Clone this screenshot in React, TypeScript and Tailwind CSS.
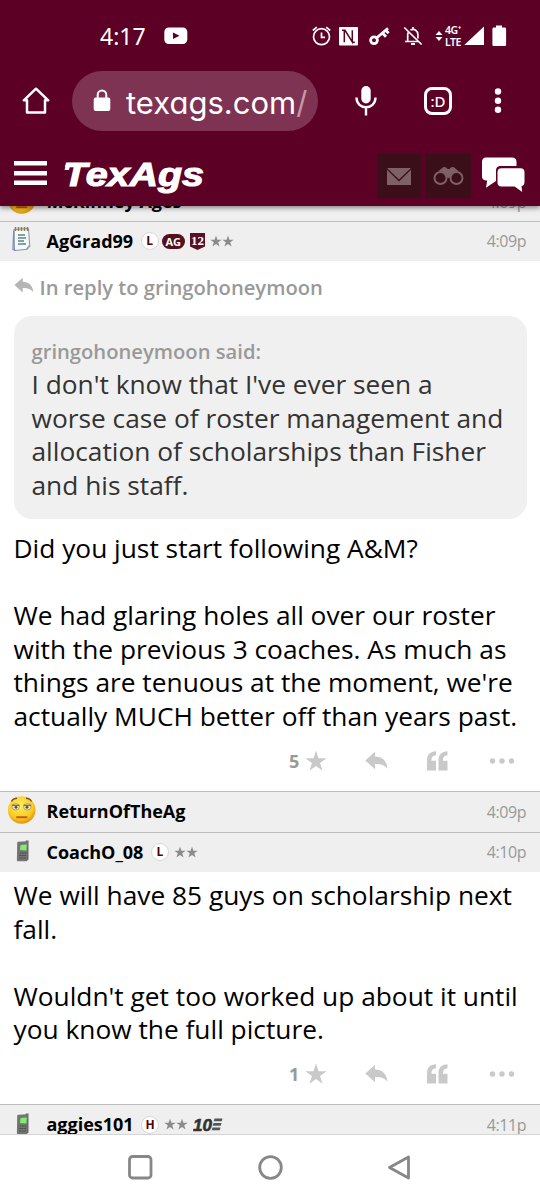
import type { ReactNode } from "react";

function StatusBar() {
  return (
    <div className="flex h-[72px] items-center pl-[100px] font-['Noto_Sans',sans-serif] text-white">
      <span className="w-[64px] text-[23px] leading-none">4:17</span>
      <svg width="24" height="18" viewBox="0 0 24 18">
        <rect x="0.3" y="0.5" width="23" height="16.5" rx="4.5" fill="#fff" />
        <path d="M9 5.5l6.5 3.3L9 12z" fill="#5c0025" />
      </svg>

      {/* alarm */}
      <svg className="ml-[124px]" width="20" height="20" viewBox="0 0 20 20" fill="none" stroke="#fff" strokeWidth="1.7">
        <circle cx="9.5" cy="10.7" r="8" />
        <path d="M9.5 6.5v4.8h3.6M0.8 4.5l4-3.4M14.2 1.1l4 3.4" />
      </svg>
      {/* nfc */}
      <svg className="ml-[7px]" width="19" height="20" viewBox="0 0 19 20">
        <rect y="1" width="19" height="18.5" rx="1" fill="#fff" />
        <path d="M3 4.3h3l7.3 11.500V4.300M5.300 4.300v12M13.300 16.200h2.500" fill="none" stroke="#5c0025" strokeWidth="1.500" />
      </svg>
      {/* key */}
      <svg className="ml-[11px]" width="21" height="20" viewBox="0 0 21 20" fill="none" stroke="#fff" strokeWidth="2.8">
        <circle cx="5" cy="14.3" r="3.4" />
        <path d="M7.8 11.8L19 2.2M13.4 7l3.6 3.8M16.8 4.2l2.8 3" />
      </svg>
      {/* muted bell */}
      <svg className="ml-[13px]" width="20" height="20" viewBox="0 0 20 20" fill="none" stroke="#fff" strokeWidth="1.7">
        <path d="M4.7 15.2V9c0-1 .2-2 .7-2.7M7.4 4.1c4-2 7.5.8 7.5 4.7v3.8M2 15.5h13" />
        <path d="M10 1v2M1.3 1.5L18.6 18.5" />
        <path d="M8 18h4" strokeWidth="2" />
      </svg>
      <svg className="ml-[12px]" width="8" height="12" viewBox="0 0 8 12" fill="#fff">
        <path d="M0.5 5L4 1l3.5 4zM0.5 7L4 11l3.5-4z" />
      </svg>
      <div className="ml-[2px] w-[18px] whitespace-nowrap text-[10.5px] font-semibold leading-[12px] tracking-[-0.5px]">
        <div>4G⁺</div>
        <div>LTE</div>
      </div>
      <svg className="ml-[1px]" width="21" height="20" viewBox="0 0 21 20" fill="#fff">
        <path d="M20 0.5v18.5H0.3z" />
      </svg>
      <svg className="ml-[7px]" width="15" height="22" viewBox="0 0 15 22" fill="#fff">
        <path d="M4 0.5h6v2h2.5c1 0 1.6.6 1.6 1.6V19.5c0 1-.6 1.6-1.6 1.6H2c-1 0-1.6-.6-1.6-1.6V4.1c0-1 .6-1.6 1.6-1.6h2z" />
      </svg>
    </div>
  );
}

function BrowserBar() {
  return (
    <div className="-mt-[1px] flex h-[60px] items-center text-white">
      <svg className="ml-[22px]" width="28" height="28" viewBox="0 0 28 28" fill="none" stroke="#fff" strokeWidth="2.5" strokeLinejoin="round" strokeLinecap="round">
        <path d="M1.8 13.3L14 1.7l12.2 11.6h-3.2v12.2H5V13.3z" />
      </svg>
      <div className="ml-[22px] flex h-[60px] w-[246px] items-center rounded-full bg-[#7d3351] pl-[21px]">
        <svg width="18" height="24" viewBox="0 0 18 24">
          <rect x="0.7" y="8.5" width="16.6" height="13.5" rx="2" fill="#fff" />
          <path d="M4.7 9V5.7a4.3 4.3 0 0 1 8.6 0V9" fill="none" stroke="#fff" strokeWidth="2" />
        </svg>
        <span className="ml-[15px] mt-[2px] whitespace-nowrap font-['Inter',sans-serif] text-[31px] leading-none [font-feature-settings:'cv11']">
          texags.com<span className="text-[#c795a8]">/</span>
        </span>
      </div>
      <svg className="ml-[37px]" width="22" height="32" viewBox="0 0 22 32">
        <rect x="6.3" y="1" width="9.4" height="17.5" rx="4.7" fill="#fff" />
        <path d="M1.5 12.5c0 13 19 13 19 0M11 22.5V30.5" fill="none" stroke="#fff" strokeWidth="2.4" />
      </svg>
      <div className="ml-[47px] flex h-[28px] w-[28px] items-center justify-center rounded-[8px] border-[3px] border-white font-['Noto_Sans',sans-serif] text-[15px] font-medium leading-none">
        :D
      </div>
      <svg className="ml-[42px]" width="8" height="26" viewBox="0 0 8 26" fill="#fff">
        <circle cx="4" cy="3.5" r="3.2" />
        <circle cx="4" cy="12.7" r="3.2" />
        <circle cx="4" cy="21.8" r="3.2" />
      </svg>
    </div>
  );
}

function SiteBar() {
  return (
    <div className="flex h-[74px] pt-[23px]">
      <svg className="ml-[13px] mt-[6px]" width="34" height="26" viewBox="0 0 34 26" fill="#fff">
        <path d="M1 1h33v4.4H1zM1 11h33v4.4H1zM1 20.5h33v4.4H1z" />
      </svg>
      <svg className="ml-[17px]" width="142" height="42" viewBox="0 0 142 42">
        <text x="-1" y="32" textLength="141" lengthAdjust="spacingAndGlyphs" fill="#fff" stroke="#fff" strokeWidth="1.1" className="font-['Liberation_Sans',sans-serif] text-[33px] font-bold italic">
          TexAgs
        </text>
        {/* slab on the left end of the T */}
        <path d="M2.5 9h4l-1.5 7H0.5z" fill="#fff" />
      </svg>
      <div className="ml-[171px] flex h-[44px] w-[44px] items-center justify-center bg-[#3a0f19]">
        <svg width="24" height="17" viewBox="0 0 24 17" fill="#806068">
          <path d="M0 0h24L12 11.5zM0 1.8L12 13.5 24 1.8V17H0z" />
        </svg>
      </div>
      <div className="ml-[5px] flex h-[44px] w-[45px] items-center justify-center bg-[#3a0f19]">
        <svg width="31" height="20" viewBox="0 0 31 20" fill="none" stroke="#806068">
          <circle cx="7.5" cy="12" r="6" strokeWidth="1.9" />
          <circle cx="23.5" cy="12" r="6" strokeWidth="1.9" />
          <path d="M5 5.5L9.8 1.5c2-1 3.7 0 4.7 1.5h2c1-1.5 2.7-2.5 4.7-1.5L26 5.5c-5-1-9 2.5-9.5 6.5h-2C14 8 10 4.5 5 5.5z" fill="#806068" stroke="none" />
        </svg>
      </div>
      <svg className="ml-[10px] mt-[3px]" width="44" height="36" viewBox="0 0 44 36" fill="#fff">
        <path d="M5 0.5h26c3 0 4.5 1.5 4.5 4.5v4H20c-3.5 0-5 1.6-5 5v10l-10 6.8 1.2-7.3C2.5 23.5 1 22 1 19V5C1 2 2.5 0.5 5 0.5z" />
        <path d="M20.5 11.3h19c2.6 0 4 1.4 4 4V25c0 2.6-1.4 4-3 4l.7 6-7.5-5.5H20.5c-2.6 0-4-1.4-4-4V15.3c0-2.6 1.4-4 4-4z" />
      </svg>
    </div>
  );
}

function Notepad() {
  return (
    <svg width="20" height="26" viewBox="0 0 20 26">
      <path d="M2 3.5l14.5-1 1.3 18-2.8 2.8-12.5 1.2z" fill="#f4fbfb" stroke="#8a93ad" />
      <path d="M1.8 4.5L1 23.5l3 1" fill="none" stroke="#7d86bd" strokeWidth="1.3" />
      <path d="M3.5 1v4M6.5 1v4M9.5 1v4M12.5 1v4M15.5 1v4" stroke="#8f7b45" strokeWidth="1.5" />
      <path d="M6 9h7M6 12h8M6 15h6M6 18h8" stroke="#5b8583" strokeWidth="1.3" />
      <path d="M17.5 19.5l-3 4" stroke="#9a9fb0" strokeWidth="1.5" />
    </svg>
  );
}

function Face() {
  return (
    <svg width="30" height="30" viewBox="0 0 30 30">
      <defs>
        <radialGradient id="skin" cx="0.45" cy="0.35" r="0.65">
          <stop offset="0" stopColor="#ffee57" />
          <stop offset="0.7" stopColor="#fbcb26" />
          <stop offset="1" stopColor="#dd930f" />
        </radialGradient>
      </defs>
      <circle cx="14.7" cy="15" r="13.8" fill="url(#skin)" />
      <path d="M4.5 6.5c1-2 3-3.2 5.5-3.2M19 3.3c2.5 0 4.5 1.2 5.5 3.2" fill="none" stroke="#7b5217" strokeWidth="1.5" />
      <ellipse cx="8.7" cy="11.8" rx="3.7" ry="3.2" fill="#efe9c9" stroke="#a8842a" strokeWidth="0.7" />
      <ellipse cx="20.3" cy="11.8" rx="3.7" ry="3.2" fill="#efe9c9" stroke="#a8842a" strokeWidth="0.7" />
      <path d="M4.8 10.3h7.8M16.4 10.3h7.8" stroke="#8f6c25" strokeWidth="1.3" />
      <circle cx="9" cy="12.3" r="1.4" fill="#4c4a42" />
      <circle cx="20" cy="12.3" r="1.4" fill="#4c4a42" />
      <path d="M10 22.3h9.5" stroke="#c95a16" strokeWidth="2" strokeLinecap="round" />
    </svg>
  );
}

function Phone() {
  return (
    <svg className="ml-[2px] mt-[2px]" width="14" height="24" viewBox="0 0 14 24">
      <path d="M9.8 1.5h2.7V20.5L10 22.5z" fill="#666" />
      <path d="M2.5 2.7L10.5 2.3c.8 0 1.3.5 1.3 1.2L11 20.8c-.1 1-.7 1.5-1.5 1.5H2.5c-1.2 0-1.7-.5-1.6-1.5L1.2 4c0-.8.5-1.3 1.3-1.3z" fill="#747474" />
      <path d="M4.5 6l6.3-.4-.4 6L4 11z" fill="#7bf06c" />
      <path d="M3.5 14h6.8M3.3 16.5h6.8M3.2 19h6.6" stroke="#4b4b4b" strokeWidth="1.2" strokeDasharray="1.8 0.7" />
    </svg>
  );
}

function Tag({ children }: { children: ReactNode }) {
  return (
    <span className="flex h-[18px] w-[18px] items-center justify-center rounded-full border border-[#d8d8d8] bg-white text-[12px] font-bold leading-none text-[#500000]">
      {children}
    </span>
  );
}

function Stars() {
  return (
    <svg width="24" height="13" viewBox="0 0 24 13" fill="#8b8b8b">
      <path d="M6 0.5l1.4 4.2h4.3L8.2 7.3l1.4 4.2L6 8.9l-3.6 2.6 1.4-4.2L0.3 4.7h4.3z" />
      <path d="M18 0.5l1.4 4.2h4.3l-3.5 2.6 1.4 4.2L18 8.9l-3.6 2.6 1.4-4.2-3.5-2.6h4.3z" />
    </svg>
  );
}

type RowProps = { icon: ReactNode; name: string; time: string; badges?: ReactNode };

function PosterRow({ icon, name, time, badges }: RowProps) {
  return (
    <div className="flex h-[40.5px] shrink-0 items-center border-t-[1.5px] border-[#bdbdbd] bg-[#efefef] pr-[14px]">
      <div className="flex w-[44px] justify-center pb-[4px]">{icon}</div>
      <div className="ml-[2.5px] whitespace-nowrap text-[18px] font-bold text-black">{name}</div>
      <div className="ml-[7.5px] flex items-center gap-[5px]">{badges}</div>
      <div className="ml-auto text-[16px] tracking-[-0.45px] text-[#999]">{time}</div>
    </div>
  );
}

function PostActions({ stars }: { stars: number }) {
  return (
    <div className="flex h-[24px] items-center text-[#c9c9c9]">
      <span className="ml-[289px] w-[16px] text-[18px] font-bold leading-none text-[#999]">{stars}</span>
      <svg width="22" height="22" viewBox="0 0 22 22" fill="currentColor">
        <path d="M11 0.5l2.5 7.7h8.1l-6.6 4.8 2.6 7.8L11 16l-6.6 4.8L7 13 0.4 8.2h8.1z" />
      </svg>
      <svg className="ml-[38px]" width="23" height="20" viewBox="0 0 23 20" fill="currentColor">
        <path d="M0.3 9.5L10 0.8v4.7c7 0 12 4.5 12.4 12.2-3-4-7-5-12.4-4.8v5.3z" />
      </svg>
      <svg className="ml-[39px]" width="22" height="20" viewBox="0 0 22 20" fill="currentColor">
        <path d="M0 19.5V9C0 3.5 3.5 0.5 9 0.3v4C6 4.5 4.5 6 4.5 9.7H9v9.8zM11.5 19.5V9c0-5.5 3.500-8.500 9-8.700v4c-3 .2-4.500 1.700-4.500 5.400h4.500v9.800z" />
      </svg>
      <svg className="ml-[40px]" width="26" height="8" viewBox="0 0 26 8" fill="currentColor">
        <circle cx="3.5" cy="4" r="2.7" />
        <circle cx="13" cy="4" r="2.7" />
        <circle cx="22.5" cy="4" r="2.7" />
      </svg>
    </div>
  );
}

function Thread() {
  return (
    <main className="flex h-[929px] flex-col overflow-hidden border-b border-[#d5d5d5]">
      {/* row scrolled half under the header */}
      <div className="-mb-[1px] -mt-[25px] flex flex-col">
        <PosterRow icon={<Face />} name="McKinney Ages" time="4:09p" />
      </div>
      <PosterRow
        icon={<Notepad />}
        name="AgGrad99"
        time="4:09p"
        badges={
          <>
            <Tag>L</Tag>
            <span className="-ml-[2px] flex h-[15px] w-[23px] items-center justify-center rounded-full bg-[#551020] text-[11px] font-bold leading-none text-white">
              AG
            </span>
            <svg width="15" height="19" viewBox="0 0 15 19">
              <path d="M0 1h15v13.5L7.5 18 0 14.5z" fill="#5c1023" />
              <text x="7.5" y="13" textAnchor="middle" fill="#fff" className="font-['Liberation_Serif',serif] text-[13px] font-bold">
                12
              </text>
            </svg>
            <Stars />
          </>
        }
      />

      <article className="h-[530px] shrink-0 pl-[13.5px] pr-[13.5px]">
        <div className="flex h-[55px] items-center pb-[3px] text-[20.2px] font-semibold text-[#999]">
          <svg className="mb-[3px]" width="20" height="17" viewBox="0 0 23 20" fill="#b5b5b5">
            <path d="M0.3 9.5L10 0.8v4.7c7 0 12 4.5 12.4 12.2-3-4-7-5-12.4-4.8v5.3z" />
          </svg>
          <span className="ml-[6px] whitespace-nowrap">In reply to gringohoneymoon</span>
        </div>
        <blockquote className="h-[203px] rounded-[18px] bg-[#f0f0f0] pl-[18px] pt-[18.5px]">
          <p className="text-[20.2px] font-semibold leading-[33.5px] text-[#999]">gringohoneymoon said:</p>
          <p className="whitespace-nowrap text-[26.3px] leading-[33.5px] text-[#333]">
            I don't know that I've ever seen a
            <br />
            worse case of roster management and
            <br />
            allocation of scholarships than Fisher
            <br />
            and his staff.
          </p>
        </blockquote>
        <p className="mt-[13px] whitespace-nowrap text-[26.3px] leading-[33.6px] text-black">
          Did you just start following A&amp;M?
          <br />
          <br />
          We had glaring holes all over our roster
          <br />
          with the previous 3 coaches. As much as
          <br />
          things are tenuous at the moment, we're
          <br />
          actually MUCH better off than years past.
        </p>
        <div className="-ml-[13.5px] mt-[15px]">
          <PostActions stars={5} />
        </div>
      </article>

      <PosterRow icon={<Face />} name="ReturnOfTheAg" time="4:09p" />
      <PosterRow
        icon={<Phone />}
        name="CoachO_08"
        time="4:10p"
        badges={
          <>
            <Tag>L</Tag>
            <Stars />
          </>
        }
      />

      <article className="h-[232px] shrink-0 pl-[13.5px]">
        <p className="mt-[7px] whitespace-nowrap text-[26.3px] leading-[33.5px] text-black">
          We will have 85 guys on scholarship next
          <br />
          fall.
          <br />
          <br />
          Wouldn't get too worked up about it until
          <br />
          you know the full picture.
        </p>
        <div className="-ml-[13.5px] mt-[15px]">
          <PostActions stars={1} />
        </div>
      </article>

      <PosterRow
        icon={<Phone />}
        name="aggies101"
        time="4:11p"
        badges={
          <>
            <Tag>H</Tag>
            <Stars />
            <svg width="30" height="15" viewBox="0 0 30 15">
              <text x="0" y="13.5" textLength="19" lengthAdjust="spacingAndGlyphs" fill="#333" stroke="#333" strokeWidth="0.6" className="font-['Liberation_Sans',sans-serif] text-[17px] font-bold italic">
                10
              </text>
              <path d="M21.5 1.5h8l-.8 2.7h-8zM20.5 6h8l-.8 2.7h-8zM19.5 10.5h8l-.8 2.7h-8z" fill="#555" />
            </svg>
          </>
        }
      />
    </main>
  );
}

function NavBar() {
  return (
    <nav className="flex h-[65px] items-center justify-center gap-[104.5px] bg-white">
      <svg width="25" height="25" viewBox="0 0 25 25" fill="none" stroke="#878787" strokeWidth="2.8">
        <rect x="1.5" y="1.5" width="21.5" height="21.5" rx="3" />
      </svg>
      <svg width="25" height="25" viewBox="0 0 25 25" fill="none" stroke="#878787" strokeWidth="2.8">
        <circle cx="12.5" cy="12.5" r="10.8" />
      </svg>
      <svg width="25" height="25" viewBox="0 0 25 25" fill="none" stroke="#878787" strokeWidth="2.8" strokeLinejoin="round">
        <path d="M2.5 12.5L21.5 2v21z" />
      </svg>
    </nav>
  );
}

export default function App() {
  return (
    <div className="h-[1200px] w-[540px] overflow-hidden bg-white font-['Open_Sans',sans-serif]">
      <header className="relative z-10 h-[206px] bg-[#5c0025] shadow-[0_2px_5px_rgba(0,0,0,0.45)]">
        <StatusBar />
        <BrowserBar />
        <SiteBar />
      </header>
      <Thread />
      <NavBar />
    </div>
  );
}
